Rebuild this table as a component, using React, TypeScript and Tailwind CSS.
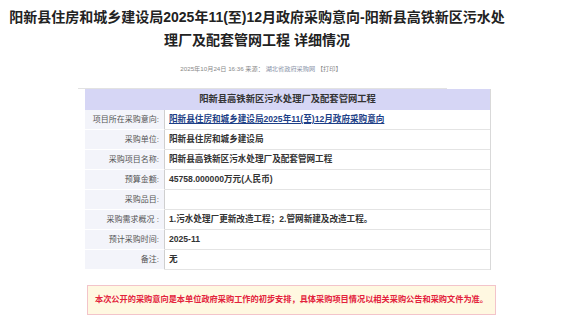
const rows: { label: string; value: string; link?: boolean }[] = [
  { label: "项目所在采购意向:", value: "阳新县住房和城乡建设局2025年11(至)12月政府采购意向", link: true },
  { label: "采购单位:", value: "阳新县住房和城乡建设局" },
  { label: "采购项目名称:", value: "阳新县高铁新区污水处理厂及配套管网工程" },
  { label: "预算金额:", value: "45758.000000万元(人民币)" },
  { label: "采购品目:", value: "" },
  { label: "采购需求概况 :", value: "1.污水处理厂更新改造工程；2.管网新建及改造工程。" },
  { label: "预计采购时间:", value: "2025-11" },
  { label: "备注:", value: "无" },
];

export default function App() {
  return (
    <div
      className="w-[574px] h-[323px] bg-white overflow-hidden text-[#333]"
      style={{ fontFamily: '"Liberation Sans", "Noto Sans CJK SC", sans-serif' }}
    >
      {/* title */}
      <div className="w-[514px] pt-[6px] text-center text-[14px] font-bold leading-[23px] text-[#222]">
        <div className="whitespace-nowrap">阳新县住房和城乡建设局2025年11(至)12月政府采购意向-阳新县高铁新区污水处</div>
        <div>理厂及配套管网工程 详细情况</div>
      </div>

      {/* meta */}
      <div className="w-[522px] mt-[12px] text-center text-[6.2px] leading-[10px] text-[#888]">
        2025年10月24日 16:36 来源： <span className="text-[#8a93a8]">湖北省政府采购网</span> 【打印】
      </div>

      <div className="ml-[78px] mt-[14px] w-[369px] border-t border-[#e2e2e2]" />

      {/* table */}
      <div className="ml-[85px] w-[406px] border-r border-[#d9d9d9]">
        <div className="h-[21px] bg-[#d6d6f5] flex items-center justify-center text-[9.3px] font-bold text-[#333]">
          阳新县高铁新区污水处理厂及配套管网工程
        </div>
        {rows.map((r, i) => (
          <div key={i} className="flex h-[20px]">
            <div className="w-[80px] shrink-0 bg-[#f3f4fa] border-b border-white border-r border-r-[#cfcfcf] flex items-center justify-end pr-[5px] text-[8px] text-[#555] whitespace-nowrap">
              {r.label}
            </div>
            <div className="flex-1 border-b border-[#e4e4e4] flex items-center pl-[4px] text-[8.6px] font-semibold whitespace-nowrap">
              {r.link ? (
                <span className="text-[#1d3f87] underline">{r.value}</span>
              ) : (
                <span className="text-[#333]">{r.value}</span>
              )}
            </div>
          </div>
        ))}
      </div>

      {/* notice */}
      <div className="ml-[87px] mt-[15px] w-[409px] h-[30px] border border-[#f3c4ca] bg-[#fff8e1] flex items-center justify-center text-[8.2px] font-bold text-[#e3223c] whitespace-nowrap">
        本次公开的采购意向是本单位政府采购工作的初步安排，具体采购项目情况以相关采购公告和采购文件为准。
      </div>
    </div>
  );
}
